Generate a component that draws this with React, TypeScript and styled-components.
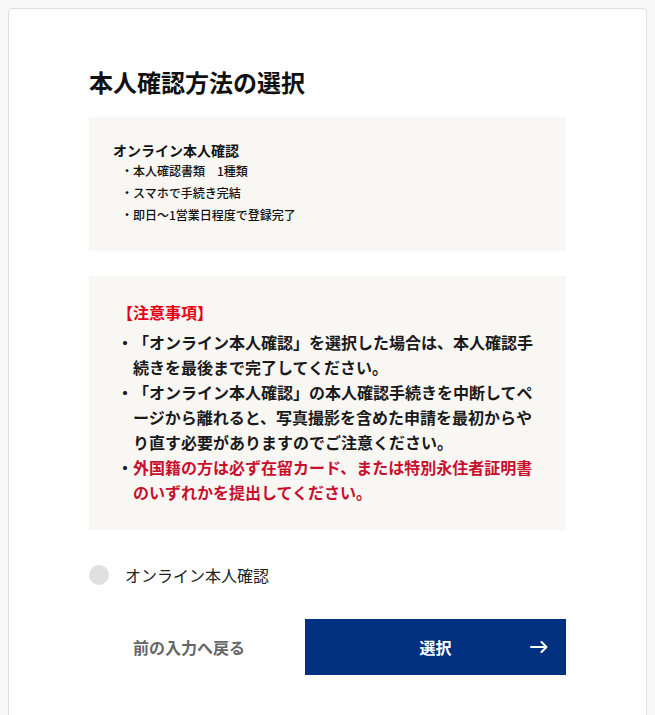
import * as React from "react";
import styled, { createGlobalStyle } from "styled-components";

const GlobalStyle = createGlobalStyle`
	html, body {
		margin: 0;
		padding: 0;
		background: #f8f8f8;
	}
	body {
		padding: 8px;
		font-family: "Noto Sans CJK JP", "Noto Sans", sans-serif;
		color: #222;
	}
	* {
		box-sizing: border-box;
	}
`;

const Card = styled.div`
	background: #fff;
	border: 1px solid #dedede;
	border-radius: 4px;
	padding: 55px 80px 60px;
	min-height: 760px;
`;

const Title = styled.h1`
	margin: 0 0 17px;
	font-size: 24px;
	line-height: 36px;
	font-weight: 700;
	color: #111;
`;

const InfoBox = styled.div<{ $pad: string }>`
	background: #f8f7f4;
	padding: ${(props) => props.$pad};
	& + & {
		margin-top: 25px;
	}
`;

const MethodName = styled.div`
	font-size: 14px;
	line-height: 20px;
	font-weight: 700;
	color: #111;
`;

const MethodList = styled.ul`
	list-style: none;
	margin: 0;
	padding: 0 0 0 8px;
`;

const MethodItem = styled.li`
	font-size: 12px;
	line-height: 22px;
	font-weight: 500;
	color: #111;
	&::before {
		content: "・";
	}
`;

const NoticeHead = styled.div`
	font-size: 16px;
	line-height: 25px;
	font-weight: 700;
	color: #e60012;
	margin-bottom: 5px;
`;

const NoticeList = styled.ul`
	list-style: none;
	margin: 0;
	padding: 0;
`;

const NoticeItem = styled.li<{ $warn?: boolean }>`
	position: relative;
	padding-left: 16px;
	font-size: 16px;
	line-height: 25px;
	font-weight: 700;
	color: ${(props) => (props.$warn ? "#c8102e" : "#1a1a1a")};
	&::before {
		content: "・";
		position: absolute;
		left: 0;
		top: 0;
		color: #1a1a1a;
	}
`;

const RadioRow = styled.label`
	display: flex;
	align-items: center;
	gap: 16px;
	margin-top: 33px;
	font-size: 16px;
	line-height: 24px;
	color: #222;
	cursor: pointer;
`;

const RadioDot = styled.span`
	width: 20px;
	height: 20px;
	border-radius: 50%;
	background: #e0e0e0;
	flex-shrink: 0;
`;

const Actions = styled.div`
	display: grid;
	grid-template-columns: 200px 1fr;
	gap: 16px;
	margin-top: 32px;
`;

const Button = styled.button<{ $primary?: boolean }>`
	position: relative;
	display: flex;
	align-items: center;
	justify-content: center;
	height: 56px;
	border: none;
	border-radius: 0;
	font-family: inherit;
	font-size: 16px;
	font-weight: 700;
	cursor: pointer;
	background: ${(props) => (props.$primary ? "#00307f" : "transparent")};
	color: ${(props) => (props.$primary ? "#fff" : "#666")};
`;

const ArrowIcon = styled.svg`
	position: absolute;
	right: 18px;
	top: 50%;
	transform: translateY(-50%);
`;

export default function App() {
	const methodPoints = ["本人確認書類　1種類", "スマホで手続き完結", "即日〜1営業日程度で登録完了"];

	return (
		<>
			<GlobalStyle />
			<Card>
				<Title>本人確認方法の選択</Title>

				<InfoBox $pad="23px 24px 25px">
					<MethodName>オンライン本人確認</MethodName>
					<MethodList>
						{methodPoints.map((p) => (
							<MethodItem key={p}>{p}</MethodItem>
						))}
					</MethodList>
				</InfoBox>

				<InfoBox $pad="24px 29px 25px 28px">
					<NoticeHead>【注意事項】</NoticeHead>
					<NoticeList>
						<NoticeItem>
							「オンライン本人確認」を選択した場合は、本人確認手続きを最後まで完了してください。
						</NoticeItem>
						<NoticeItem>
							「オンライン本人確認」の本人確認手続きを中断してページから離れると、写真撮影を含めた申請を最初からやり直す必要がありますのでご注意ください。
						</NoticeItem>
						<NoticeItem $warn>
							外国籍の方は必ず在留カード、または特別永住者証明書のいずれかを提出してください。
						</NoticeItem>
					</NoticeList>
				</InfoBox>

				<RadioRow>
					<RadioDot />
					オンライン本人確認
				</RadioRow>

				<Actions>
					<Button type="button">前の入力へ戻る</Button>
					<Button type="button" $primary>
						選択
						<ArrowIcon width="18" height="12" viewBox="0 0 18 12" fill="none">
							<path
								d="M1 6H16.5M11.5 1L16.5 6L11.5 11"
								stroke="#fff"
								strokeWidth="2"
								strokeLinecap="round"
								strokeLinejoin="round"
							/>
						</ArrowIcon>
					</Button>
				</Actions>
			</Card>
		</>
	);
}
